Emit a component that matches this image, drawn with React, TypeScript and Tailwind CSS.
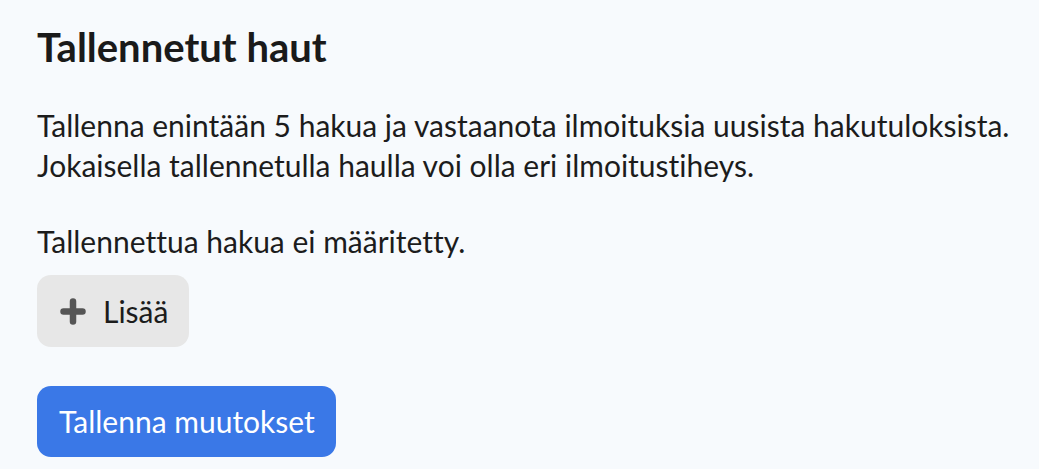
import React from "react";

export default function App() {
  return (
    <div className="min-h-[469px] w-full bg-[#f7fafd] pl-[37px] pt-[23px] text-[#1c1c1c] [font-variant-ligatures:none]" style={{ fontFamily: "Lato, 'Noto Sans', sans-serif" }}>
      <h1 className="text-[40px] leading-[48px] font-bold text-[#1a1a1a]">Tallennetut haut</h1>
      <p className="mt-[34px] text-[30px] leading-[40px]">
        Tallenna enintään 5 hakua ja vastaanota ilmoituksia uusista hakutuloksista.
        <br />
        Jokaisella tallennetulla haulla voi olla eri ilmoitustiheys.
      </p>
      <p className="mt-[36px] text-[30px] leading-[40px]">Tallennettua hakua ei määritetty.</p>
      <div className="mt-[14px]">
        <button className="flex h-[72px] items-center gap-[17px] rounded-[14px] bg-[#e7e7e7] pl-[23px] pr-[21px] text-[30px] text-[#1c1c1c]">
          <svg width="26" height="27" viewBox="0 0 26 27" fill="none">
            <path d="M13 3.5v20M3.5 13.5h19" stroke="#555555" strokeWidth="6.5" strokeLinecap="round" />
          </svg>
          <span>Lisää</span>
        </button>
      </div>
      <div className="mt-[39px]">
        <button className="flex h-[71px] items-center rounded-[14px] bg-[#3a78e7] pl-[22px] pr-[21px] text-[30px] text-white">
          Tallenna muutokset
        </button>
      </div>
    </div>
  );
}
